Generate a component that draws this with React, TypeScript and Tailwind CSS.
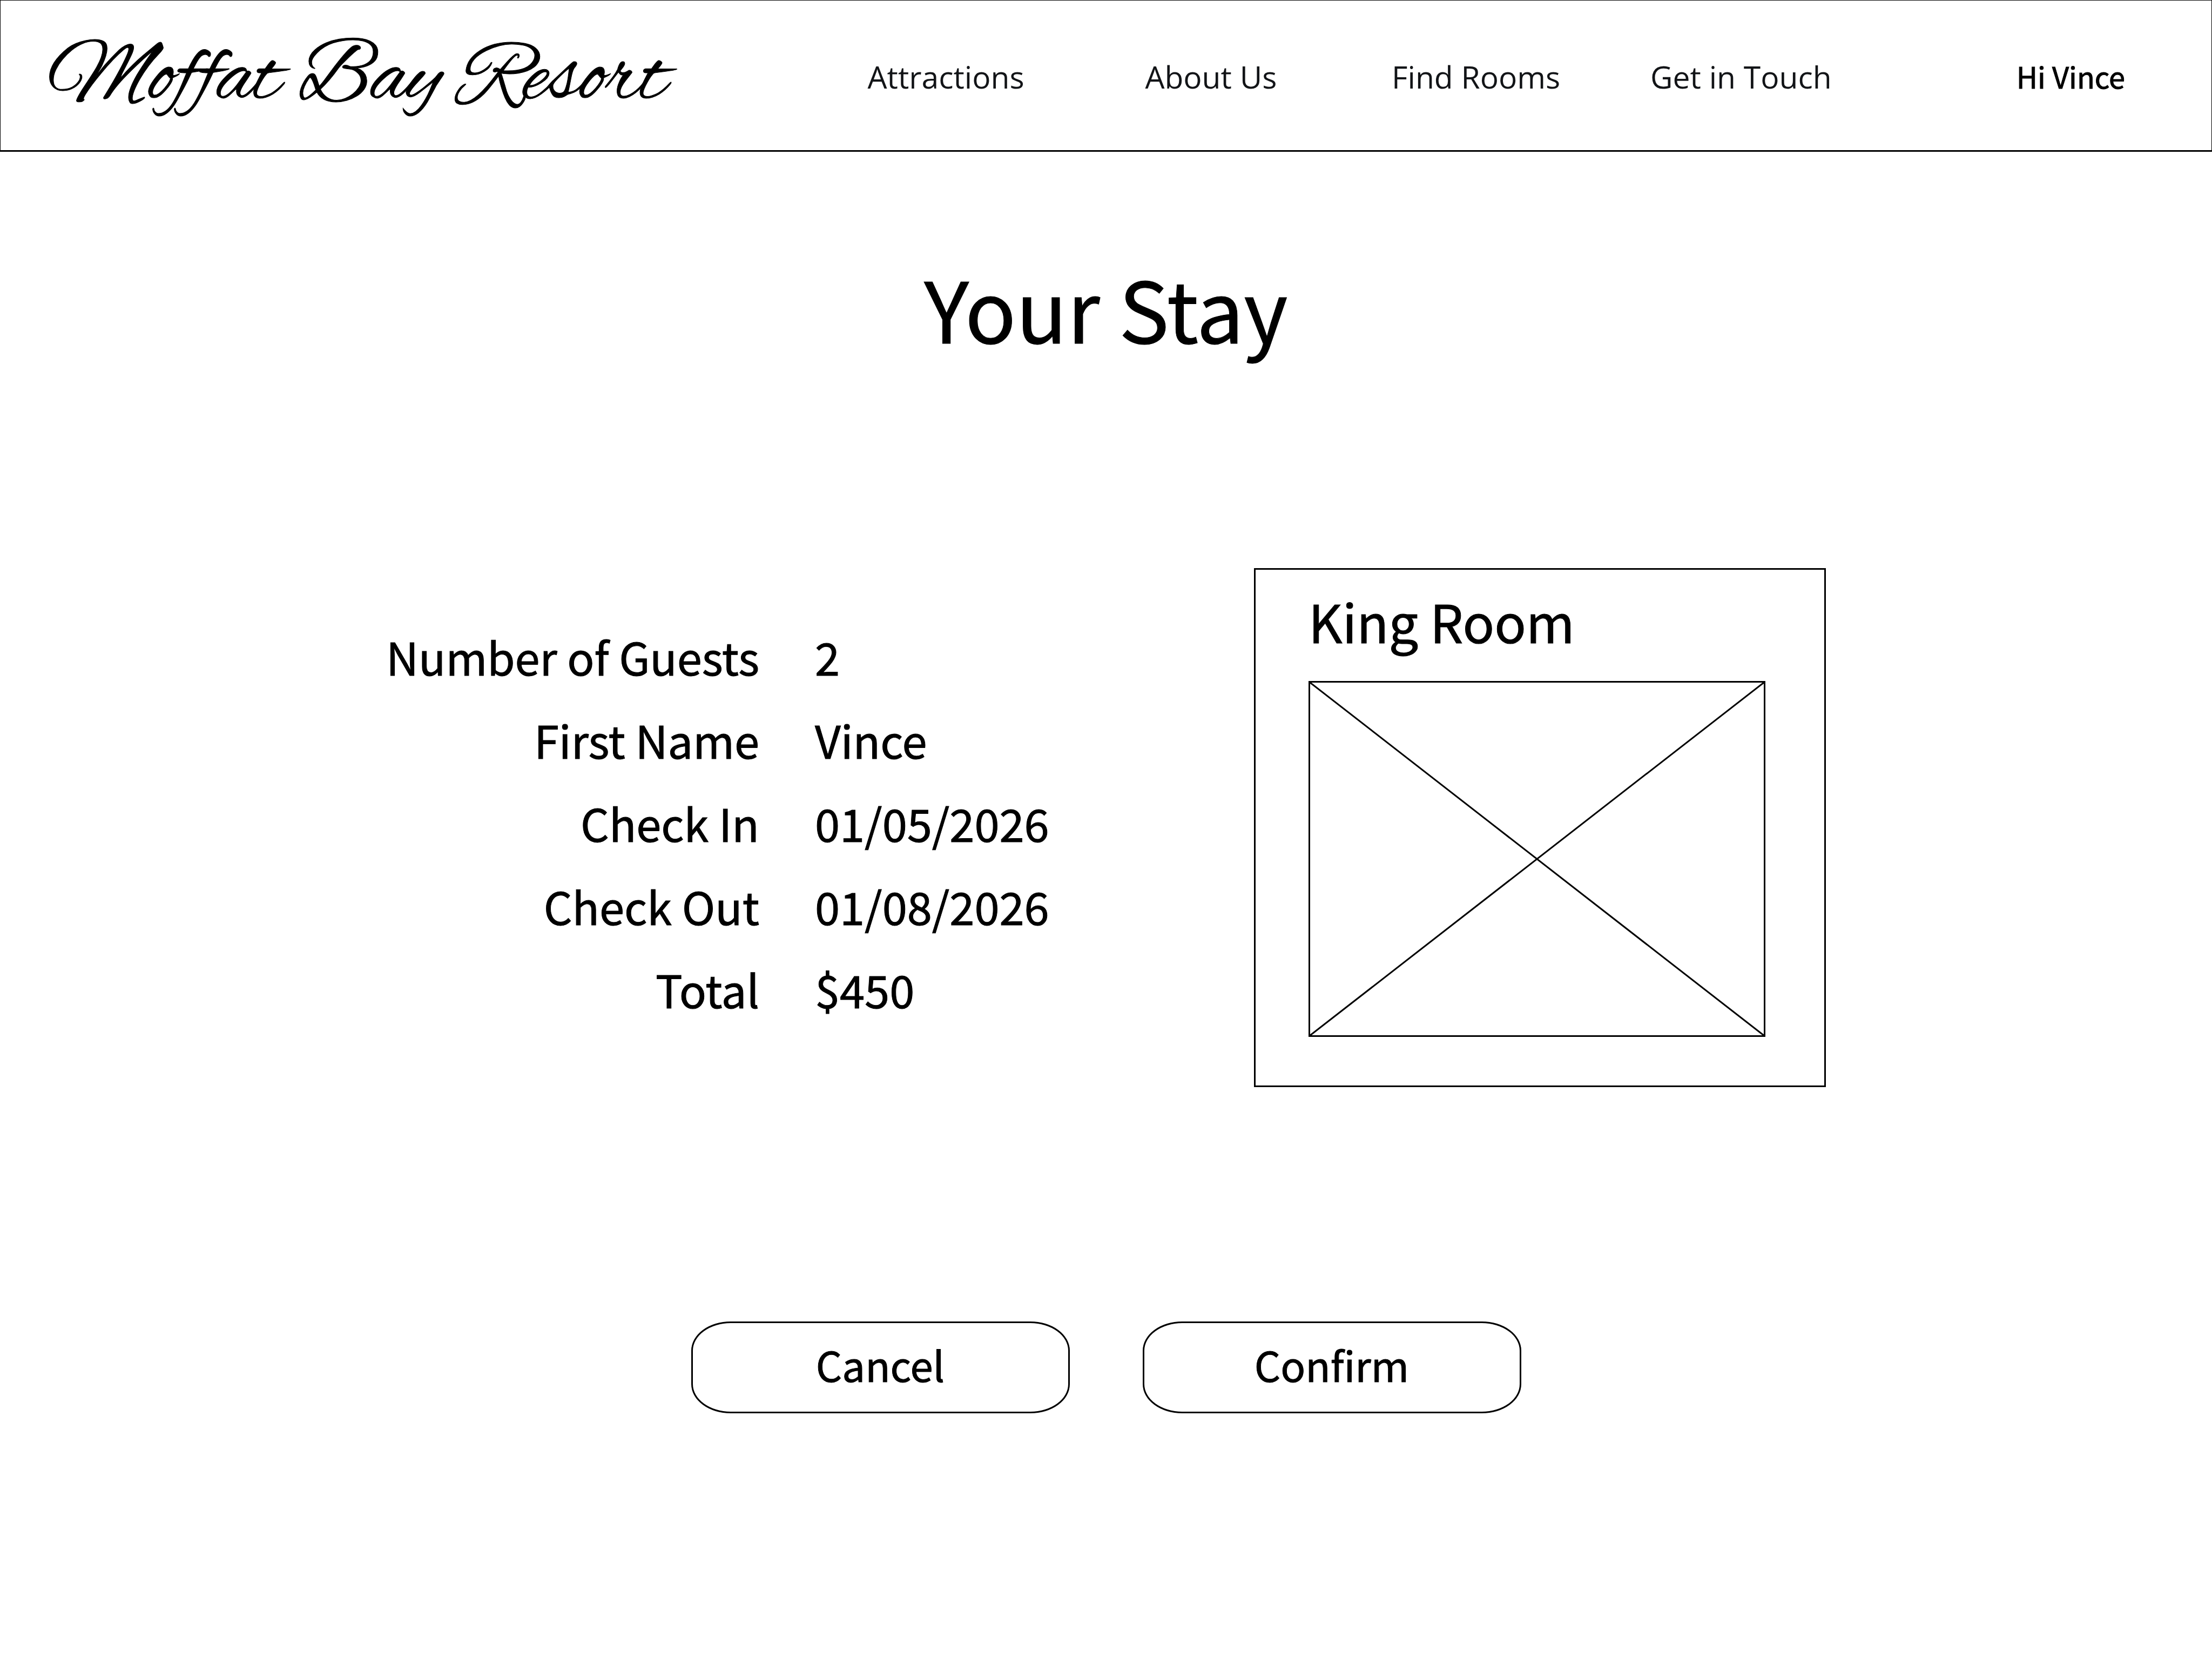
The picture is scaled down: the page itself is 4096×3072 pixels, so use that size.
const navLinks = ["Attractions", "About Us", "Find Rooms", "Get in Touch"];

const details = [
  { label: "Number of Guests", value: "2" },
  { label: "First Name", value: "Vince" },
  { label: "Check In", value: "01/05/2026" },
  { label: "Check Out", value: "01/08/2026" },
  { label: "Total", value: "$450" },
];

function Header() {
  return (
    <header className="grid grid-cols-[1506fr_2590fr] items-center border border-b-3 border-black">
      <a
        href="#home"
        className="pt-[18px] pl-[88px] font-['Alex_Brush','Brush_Script_MT',cursive] text-[165px] leading-[259px] whitespace-nowrap [-webkit-text-stroke:1px_black]"
      >
        Moffat Bay Resort
      </a>
      <div className="grid grid-cols-[1964fr_626fr] items-baseline pt-1 leading-[84px]">
        <nav className="grid grid-cols-4 text-center font-['Open_Sans',sans-serif] text-[57px] text-[#121417]">
          {navLinks.map((link) => (
            <a key={link} href="#" className="whitespace-nowrap">
              {link}
            </a>
          ))}
        </nav>
        <a
          href="#account"
          className="pr-[160px] text-right text-[54px] whitespace-nowrap [-webkit-text-stroke:1px_black]"
        >
          Hi Vince
        </a>
      </div>
    </header>
  );
}

function StayDetails() {
  return (
    <dl className="grid grid-cols-[686fr_818fr] gap-x-[103px] pb-5 text-[83px] leading-[154px]">
      {details.map(({ label, value }) => (
        <div key={label} className="contents">
          <dt className="text-right whitespace-nowrap">{label}</dt>
          <dd className="whitespace-nowrap">{value}</dd>
        </div>
      ))}
    </dl>
  );
}

function RoomCard() {
  return (
    <article className="border-3 border-black pt-[44px] pr-[109px] pb-[90px] pl-[98px]">
      <h2 className="text-[97px] leading-[100px]">King Room</h2>
      <div className="mt-[62px] aspect-[847/660] border-3 border-black">
        <svg
          className="block h-full w-full"
          viewBox="0 0 841 654"
          preserveAspectRatio="none"
          stroke="black"
          strokeWidth="3"
          role="img"
          aria-label="Room photo placeholder"
        >
          <line x1="0" y1="0" x2="841" y2="654" />
          <line x1="841" y1="0" x2="0" y2="654" />
        </svg>
      </div>
    </article>
  );
}

function ActionButton({ children }: { children: string }) {
  return (
    <button
      type="button"
      className="w-[701px] rounded-[73px/54px] border-3 border-black pb-3 text-[76px] leading-[152px]"
    >
      {children}
    </button>
  );
}

export default function App() {
  return (
    <div className="min-h-screen bg-white font-['Noto_Sans_CJK_SC',sans-serif] text-black">
      <Header />
      <main className="pt-[207px] [-webkit-text-stroke:1px_black]">
        <h1 className="text-center text-[156px] leading-[160px]">Your Stay</h1>
        <section className="mx-auto mt-[404px] grid w-full max-w-[2666px] grid-cols-[1607fr_1059fr] items-center">
          <StayDetails />
          <RoomCard />
        </section>
        <div className="mt-[434px] flex justify-center gap-[135px]">
          <ActionButton>Cancel</ActionButton>
          <ActionButton>Confirm</ActionButton>
        </div>
      </main>
    </div>
  );
}
